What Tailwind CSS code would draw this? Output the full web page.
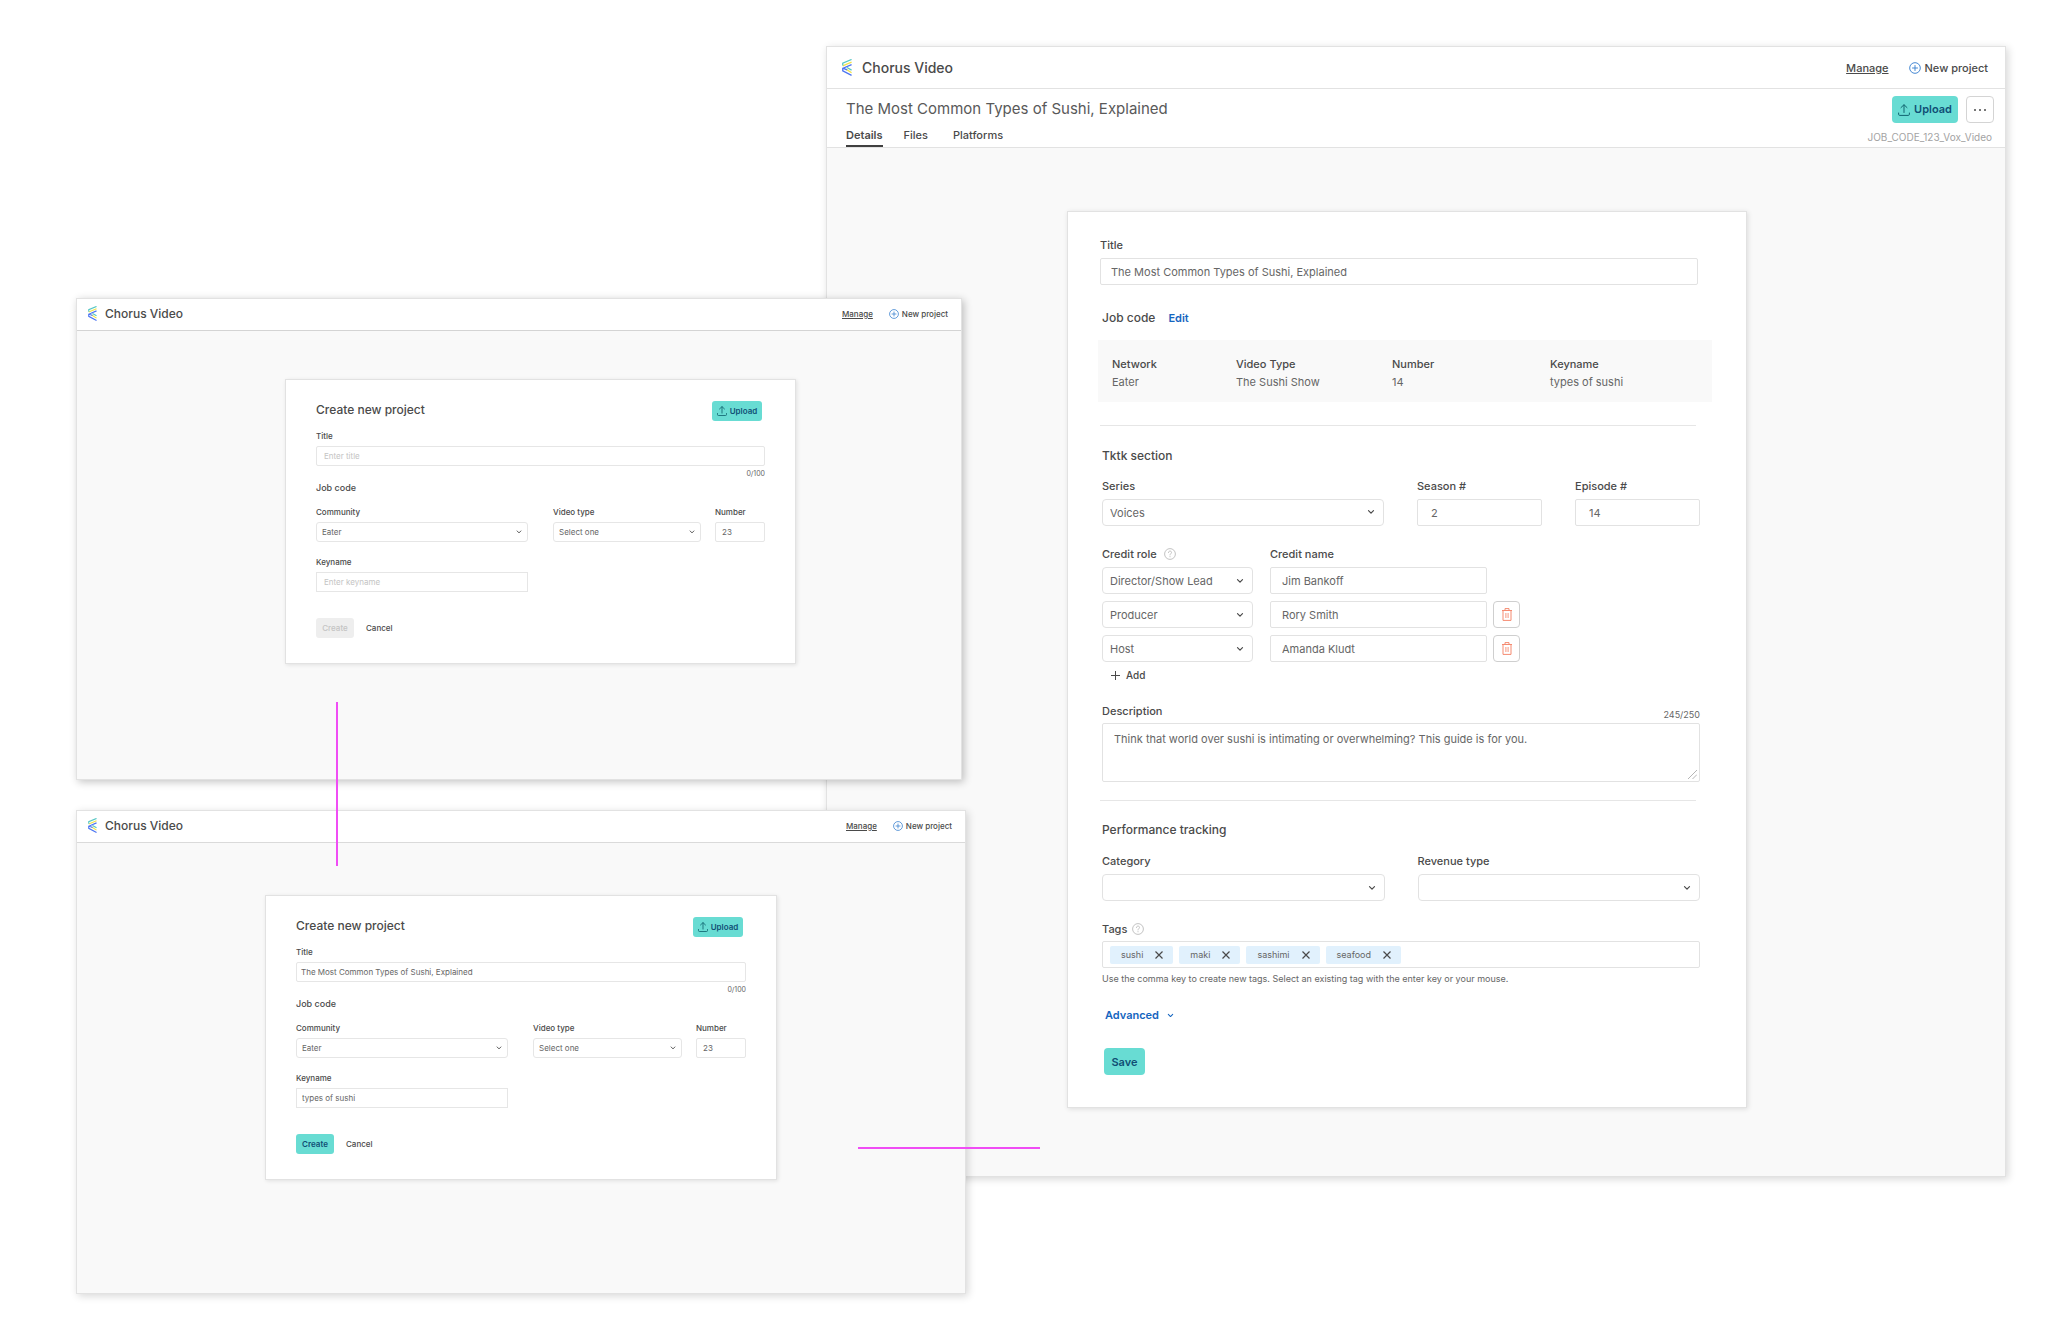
<!DOCTYPE html>
<html lang="en">
<head>
<meta charset="utf-8">
<title>Chorus Video</title>
<script src="https://cdn.jsdelivr.net/npm/@tailwindcss/browser@4"></script>
</head>
<body class="bg-white font-['Inter',sans-serif] text-[#4a4a4a]">

<svg class="hidden" aria-hidden="true">
  <symbol id="logo" viewBox="0 0 30 52">
    <g fill="none" stroke-width="4">
      <path stroke="#f2e24b" d="M29 9.500 2 21M12 31l17 11"/>
      <path stroke="#56c7c4" d="M29 1.500 2 12.500V20M15 26l14 8"/>
      <path stroke="#4b74f2" d="M29 17 3 28l12 5M2 27v9l27 14"/>
    </g>
  </symbol>
  <symbol id="plus-circle" viewBox="0 0 14 14">
    <g fill="none" stroke="#3b82d0" stroke-width="1.100"><circle cx="7" cy="7" r="6.200"/><path d="M7 3.600v6.800M3.600 7h6.800"/></g>
  </symbol>
  <symbol id="upload" viewBox="0 0 12 12">
    <path fill="none" stroke="#11646f" stroke-linecap="round" stroke-linejoin="round" d="M6 8.500V1M3 3.600 6 .7l3 2.900M.6 9v1.300c0 .7.400 1.100 1.100 1.100h8.600c.7 0 1.100-.4 1.100-1.100V9"/>
  </symbol>
  <symbol id="chevron" viewBox="0 0 8 8">
    <path fill="none" stroke="currentColor" stroke-width="1.200" stroke-linecap="round" stroke-linejoin="round" d="M1.500 2.600 4 5.200l2.500-2.600"/>
  </symbol>
  <symbol id="help" viewBox="0 0 14 14">
    <g fill="none" stroke="#b9b9b9"><circle cx="7" cy="7" r="6.300"/><path stroke-linecap="round" d="M5.200 5.400C5.200 4.200 6 3.600 7 3.600s1.800.6 1.800 1.600c0 1.300-1.800 1.400-1.800 2.900M7 10v.3"/></g>
  </symbol>
  <symbol id="trash" viewBox="0 0 10 13">
    <g fill="none" stroke="#f58a70"><path d="M0 2.500h10M3 2.500V.6h4v1.900M1 2.500v9.900h8V2.500"/><path stroke-width=".9" d="M3.900 5v5M6.100 5v5"/></g>
  </symbol>
</svg>

<main class="relative min-h-screen overflow-hidden">

  <!-- Project details window -->
  <section class="absolute left-[826px] top-[46px] w-[1180px] border border-[#e2e2e2] bg-[#f9f9f9] shadow-[2px_2px_8px_rgba(0,0,0,0.16)]">
    <header class="flex h-[42px] items-center border-b border-[#e2e2e2] bg-white pl-[15px] pr-[17px]">
      <svg class="mr-2.5 h-[17px] w-2.5"><use href="#logo"/></svg>
      <h1 class="text-sm font-medium leading-4">Chorus Video</h1>
      <nav class="ml-auto flex items-center gap-5 text-[11px] font-medium leading-4">
        <a href="#" class="underline">Manage</a>
        <a href="#" class="flex items-center gap-1"><svg class="h-3 w-3"><use href="#plus-circle"/></svg>New project</a>
      </nav>
    </header>
    <div class="flex h-[59px] justify-between border-b border-[#e2e2e2] bg-white pl-[19px] pr-[11px]">
      <div class="flex flex-col justify-between">
        <h2 class="mt-2 text-[15px] leading-6 text-[#595959]">The Most Common Types of Sushi, Explained</h2>
        <nav class="flex gap-[21px] text-[11px] font-medium leading-4">
          <a href="#" class="border-b-2 border-[#404040] pb-[2px] font-semibold">Details</a>
          <a href="#" class="pr-1">Files</a>
          <a href="#">Platforms</a>
        </nav>
      </div>
      <div class="flex flex-col items-end pt-[7px]">
        <div class="flex gap-2">
          <button class="flex h-[27px] w-[66px] items-center justify-center gap-1 rounded bg-[#68dcd3] text-[11px] font-semibold text-[#104f75]"><svg class="h-3 w-3"><use href="#upload"/></svg>Upload</button>
          <button aria-label="More" class="flex h-[27px] w-7 items-center justify-center gap-[3px] rounded border border-[#d4d4d4] bg-white"><i class="size-[2px] rounded-full bg-[#4a4a4a]"></i><i class="size-[2px] rounded-full bg-[#4a4a4a]"></i><i class="size-[2px] rounded-full bg-[#4a4a4a]"></i></button>
        </div>
        <p class="mt-1.5 pr-[2px] text-[10px] leading-4 text-[#a3a3a3]">JOB_CODE_123_Vox_Video</p>
      </div>
    </div>

    <div class="pb-[68px] pl-60 pr-[258px] pt-[63px]">
      <form class="border border-[#e2e2e2] bg-white pb-8 pl-8 pr-12 pt-[25px] text-[11px] leading-4 text-[#666] shadow-[1px_1px_5px_rgba(0,0,0,0.12)]">
        <label for="title" class="block font-medium text-[#4a4a4a]">Title</label>
        <input id="title" type="text" value="The Most Common Types of Sushi, Explained" class="mt-[5px] block h-[27px] w-full rounded-xs border border-[#e2e2e2] px-2.5">

        <div class="mt-[25px] flex items-center gap-[13px]">
          <h3 class="pl-[2px] text-xs font-medium leading-4 text-[#4a4a4a]">Job code</h3>
          <a href="#" class="font-semibold text-[#1565c0]">Edit</a>
        </div>
        <dl class="-ml-[2px] -mr-3.5 mt-3.5 grid grid-cols-[124fr_156fr_158fr_162fr] bg-[#f9f9f9] pb-3 pl-3.5 pt-4">
          <div><dt class="font-medium text-[#4a4a4a]">Network</dt><dd class="mt-[2px]">Eater</dd></div>
          <div><dt class="font-medium text-[#4a4a4a]">Video Type</dt><dd class="mt-[2px]">The Sushi Show</dd></div>
          <div><dt class="font-medium text-[#4a4a4a]">Number</dt><dd class="mt-[2px]">14</dd></div>
          <div><dt class="font-medium text-[#4a4a4a]">Keyname</dt><dd class="mt-[2px]">types of sushi</dd></div>
        </dl>
        <hr class="mr-[2px] mt-[23px] border-[#e6e6e6]">

        <div class="-mr-[2px] ml-[2px]">
          <h3 class="mt-[22px] text-xs font-medium leading-4 text-[#4a4a4a]">Tktk section</h3>
          <div class="mt-3.5 grid grid-cols-[282fr_125fr_125fr] gap-[33px]">
            <div>
              <label for="series" class="block font-medium text-[#4a4a4a]">Series</label>
              <div class="relative mt-[5px]">
                <select id="series" class="block h-[27px] w-full appearance-none rounded border border-[#e2e2e2] px-[7px]"><option>Voices</option></select>
                <svg class="pointer-events-none absolute right-[9px] top-[9px] size-2 text-[#4a4a4a]"><use href="#chevron"/></svg>
              </div>
            </div>
            <div>
              <label for="season" class="block font-medium text-[#4a4a4a]">Season #</label>
              <input id="season" type="text" value="2" class="mt-[5px] block h-[27px] w-full rounded-xs border border-[#e2e2e2] px-[13px]">
            </div>
            <div>
              <label for="episode" class="block font-medium text-[#4a4a4a]">Episode #</label>
              <input id="episode" type="text" value="14" class="mt-[5px] block h-[27px] w-full rounded-xs border border-[#e2e2e2] px-[13px]">
            </div>
          </div>

          <div class="mt-5 flex font-medium text-[#4a4a4a]">
            <label for="role1" class="flex w-[168px] items-center gap-[7px]">Credit role<svg class="h-3 w-3"><use href="#help"/></svg></label>
            <label for="name1">Credit name</label>
          </div>
          <div class="mt-[5px] flex flex-col gap-[7px]">
            <div class="flex">
              <div class="relative mr-[17px] w-[151px]">
                <select id="role1" class="block h-[27px] w-full appearance-none rounded border border-[#e2e2e2] px-[7px]"><option>Director/Show Lead</option></select>
                <svg class="pointer-events-none absolute right-[9px] top-2.5 size-2 text-[#4a4a4a]"><use href="#chevron"/></svg>
              </div>
              <input id="name1" type="text" value="Jim Bankoff" class="block h-[27px] w-[217px] rounded-xs border border-[#e2e2e2] px-[11px]">
            </div>
            <div class="flex">
              <div class="relative mr-[17px] w-[151px]">
                <select aria-label="Credit role" class="block h-[27px] w-full appearance-none rounded border border-[#e2e2e2] px-[7px]"><option>Producer</option></select>
                <svg class="pointer-events-none absolute right-[9px] top-2.5 size-2 text-[#4a4a4a]"><use href="#chevron"/></svg>
              </div>
              <input aria-label="Credit name" type="text" value="Rory Smith" class="mr-1.5 block h-[27px] w-[217px] rounded-xs border border-[#e2e2e2] px-[11px]">
              <button type="button" aria-label="Remove credit" class="flex size-[27px] items-center justify-center rounded border border-[#cfcfcf]"><svg class="h-[13px] w-2.5"><use href="#trash"/></svg></button>
            </div>
            <div class="flex">
              <div class="relative mr-[17px] w-[151px]">
                <select aria-label="Credit role" class="block h-[27px] w-full appearance-none rounded border border-[#e2e2e2] px-[7px]"><option>Host</option></select>
                <svg class="pointer-events-none absolute right-[9px] top-2.5 size-2 text-[#4a4a4a]"><use href="#chevron"/></svg>
              </div>
              <input aria-label="Credit name" type="text" value="Amanda Kludt" class="mr-1.5 block h-[27px] w-[217px] rounded-xs border border-[#e2e2e2] px-[11px]">
              <button type="button" aria-label="Remove credit" class="flex size-[27px] items-center justify-center rounded border border-[#cfcfcf]"><svg class="h-[13px] w-2.5"><use href="#trash"/></svg></button>
            </div>
          </div>
          <button type="button" class="ml-[9px] mt-[5px] flex h-4 items-center gap-1.5 text-[10px] font-medium text-[#4a4a4a]"><svg class="size-[9px]" viewBox="0 0 9 9"><path fill="none" stroke="currentColor" d="M4.500 0v9M0 4.500h9"/></svg>Add</button>

          <div class="mt-5 flex items-end justify-between">
            <label for="description" class="font-medium text-[#4a4a4a]">Description</label>
            <span class="text-[9px] leading-[9px]">245/250</span>
          </div>
          <div class="relative mt-1">
            <textarea id="description" class="block h-[59px] w-full resize-none rounded-xs border border-[#e2e2e2] px-[11px] py-[7px]">Think that world over sushi is intimating or overwhelming? This guide is for you.</textarea>
            <svg class="pointer-events-none absolute bottom-[3px] right-[3px] size-[9px]" viewBox="0 0 9 9"><path fill="none" stroke="#b5b5b5" d="M0 9 9 0M4.500 9 9 4.500"/></svg>
          </div>
        </div>
        <hr class="mr-[2px] mt-[18px] border-[#e6e6e6]">

        <div class="-mr-[2px] ml-[2px]">
          <h3 class="mt-[21px] text-xs font-medium leading-4 text-[#4a4a4a]">Performance tracking</h3>
          <div class="mt-[15px] grid grid-cols-2 gap-[33px]">
            <div>
              <label for="category" class="block font-medium text-[#4a4a4a]">Category</label>
              <div class="relative mt-[5px]">
                <select id="category" class="block h-[27px] w-full appearance-none rounded border border-[#e2e2e2] px-[7px]"><option></option></select>
                <svg class="pointer-events-none absolute right-[9px] top-2.5 size-2 text-[#4a4a4a]"><use href="#chevron"/></svg>
              </div>
            </div>
            <div>
              <label for="revenue" class="block font-medium text-[#4a4a4a]">Revenue type</label>
              <div class="relative mt-[5px]">
                <select id="revenue" class="block h-[27px] w-full appearance-none rounded border border-[#e2e2e2] px-[7px]"><option></option></select>
                <svg class="pointer-events-none absolute right-[9px] top-2.5 size-2 text-[#4a4a4a]"><use href="#chevron"/></svg>
              </div>
            </div>
          </div>

          <label for="tags" class="mt-5 flex items-center gap-[5px] font-medium text-[#4a4a4a]">Tags<svg class="h-3 w-3"><use href="#help"/></svg></label>
          <div class="mt-1 flex h-[27px] items-center gap-1.5 rounded-xs border border-[#e2e2e2] px-[7px] text-[9px]">
            <span class="flex h-[18px] items-center gap-3 rounded-xs bg-[#e1f1fd] pl-[11px] pr-2.5">sushi<button type="button" aria-label="Remove sushi" class="text-[#4a4a4a]"><svg class="size-2" viewBox="0 0 8 8"><path fill="none" stroke="currentColor" stroke-width="1.200" d="m.5.5 7 7M7.500.5l-7 7"/></svg></button></span>
            <span class="flex h-[18px] items-center gap-3 rounded-xs bg-[#e1f1fd] pl-[11px] pr-2.5">maki<button type="button" aria-label="Remove maki" class="text-[#4a4a4a]"><svg class="size-2" viewBox="0 0 8 8"><path fill="none" stroke="currentColor" stroke-width="1.200" d="m.5.5 7 7M7.500.5l-7 7"/></svg></button></span>
            <span class="flex h-[18px] items-center gap-3 rounded-xs bg-[#e1f1fd] pl-[11px] pr-2.5">sashimi<button type="button" aria-label="Remove sashimi" class="text-[#4a4a4a]"><svg class="size-2" viewBox="0 0 8 8"><path fill="none" stroke="currentColor" stroke-width="1.200" d="m.5.5 7 7M7.500.5l-7 7"/></svg></button></span>
            <span class="flex h-[18px] items-center gap-3 rounded-xs bg-[#e1f1fd] pl-[11px] pr-2.5">seafood<button type="button" aria-label="Remove seafood" class="text-[#4a4a4a]"><svg class="size-2" viewBox="0 0 8 8"><path fill="none" stroke="currentColor" stroke-width="1.200" d="m.5.5 7 7M7.500.5l-7 7"/></svg></button></span>
            <input id="tags" type="text" class="min-w-0 flex-1">
          </div>
          <p class="mt-[3px] text-[9px] leading-4">Use the comma key to create new tags. Select an existing tag with the enter key or your mouse.</p>

          <button type="button" class="ml-[3px] mt-5 flex h-4 items-center gap-2 font-semibold text-[#1565c0]">Advanced<svg class="size-[7px]"><use href="#chevron"/></svg></button>
          <button type="button" class="ml-[2px] mt-[25px] block h-[27px] w-[41px] rounded bg-[#68dcd3] text-[11px] font-semibold text-[#104f75]">Save</button>
        </div>
      </form>
    </div>
  </section>

  <!-- New project window, empty form -->
  <section class="absolute left-[76px] top-[298px] w-[886px] border border-[#e2e2e2] bg-[#f9f9f9] shadow-[2px_2px_8px_rgba(0,0,0,0.24)]">
    <header class="flex h-8 items-center border-b border-[#d4d4d4] bg-white pb-[2px] pl-[11px] pr-[13px]">
      <svg class="mr-2 h-[15px] w-[9px]"><use href="#logo"/></svg>
      <h1 class="text-xs font-medium leading-4">Chorus Video</h1>
      <nav class="ml-auto flex items-center gap-4 text-[8px] font-medium leading-3">
        <a href="#" class="underline">Manage</a>
        <a href="#" class="flex items-center gap-[3px]"><svg class="size-2.5"><use href="#plus-circle"/></svg>New project</a>
      </nav>
    </header>
    <div class="pb-[115px] pl-[208px] pr-[165px] pt-12">
      <form class="border border-[#e2e2e2] bg-white px-[30px] pb-[25px] pt-[21px] text-[8px] leading-3 text-[#666] shadow-[1px_1px_4px_rgba(0,0,0,0.1)]">
        <div class="flex items-start justify-between pr-[3px]">
          <h2 class="text-xs font-medium leading-[18px] text-[#4a4a4a]">Create new project</h2>
          <button type="button" class="flex h-5 w-[50px] items-center justify-center gap-[3px] rounded-[3px] bg-[#68dcd3] font-semibold text-[#104f75]"><svg class="size-2.5"><use href="#upload"/></svg>Upload</button>
        </div>
        <label for="a-title" class="mt-[9px] block font-medium text-[#4a4a4a]">Title</label>
        <input id="a-title" type="text" placeholder="Enter title" class="mt-1 block h-5 w-full rounded-xs border border-[#e6e6e6] px-[7px] placeholder:text-[#c4c4c4]">
        <p class="mt-[2px] text-right text-[7px]">0/100</p>
        <h3 class="mt-[2px] text-[9px] font-medium leading-3 text-[#4a4a4a]">Job code</h3>
        <div class="mt-3 flex">
          <div class="mr-[25px] w-[212px]">
            <label for="a-community" class="block font-medium text-[#4a4a4a]">Community</label>
            <div class="relative mt-1">
              <select id="a-community" class="block h-5 w-full appearance-none rounded-[3px] border border-[#e6e6e6] px-[5px]"><option>Eater</option></select>
              <svg class="pointer-events-none absolute right-1.5 top-[7px] size-1.5 text-[#4a4a4a]"><use href="#chevron"/></svg>
            </div>
          </div>
          <div class="mr-3.5 flex-1">
            <label for="a-type" class="block font-medium text-[#4a4a4a]">Video type</label>
            <div class="relative mt-1">
              <select id="a-type" class="block h-5 w-full appearance-none rounded-[3px] border border-[#e6e6e6] px-[5px]"><option>Select one</option></select>
              <svg class="pointer-events-none absolute right-1.5 top-[7px] size-1.5 text-[#4a4a4a]"><use href="#chevron"/></svg>
            </div>
          </div>
          <div class="w-[50px]">
            <label for="a-number" class="block font-medium text-[#4a4a4a]">Number</label>
            <input id="a-number" type="text" value="23" class="mt-1 block h-5 w-full rounded-xs border border-[#e6e6e6] px-1.5">
          </div>
        </div>
        <label for="a-key" class="mt-3.5 block font-medium text-[#4a4a4a]">Keyname</label>
        <input id="a-key" type="text" placeholder="Enter keyname" class="mt-1 block h-5 w-[212px] border border-[#e6e6e6] px-[7px] placeholder:text-[#c4c4c4]">
        <div class="mt-[26px] flex items-center gap-3 font-medium">
          <button type="button" disabled class="h-5 w-[38px] rounded-[3px] bg-[#eee] text-[#c4c4c4]">Create</button>
          <button type="button" class="text-[#4a4a4a]">Cancel</button>
        </div>
      </form>
    </div>
  </section>

  <!-- New project window, filled form -->
  <section class="absolute left-[76px] top-[810px] w-[890px] border border-[#e2e2e2] bg-[#f9f9f9] shadow-[2px_2px_8px_rgba(0,0,0,0.16)]">
    <header class="flex h-8 items-center border-b border-[#dadada] bg-white pb-[2px] pl-[11px] pr-[13px]">
      <svg class="mr-2 h-[15px] w-[9px]"><use href="#logo"/></svg>
      <h1 class="text-xs font-medium leading-4">Chorus Video</h1>
      <nav class="ml-auto flex items-center gap-4 text-[8px] font-medium leading-3">
        <a href="#" class="underline">Manage</a>
        <a href="#" class="flex items-center gap-[3px]"><svg class="size-2.5"><use href="#plus-circle"/></svg>New project</a>
      </nav>
    </header>
    <div class="px-[188px] pb-[113px] pt-[52px]">
      <form class="border border-[#e2e2e2] bg-white px-[30px] pb-[25px] pt-[21px] text-[8px] leading-3 text-[#666] shadow-[1px_1px_4px_rgba(0,0,0,0.1)]">
        <div class="flex items-start justify-between pr-[3px]">
          <h2 class="text-xs font-medium leading-[18px] text-[#4a4a4a]">Create new project</h2>
          <button type="button" class="flex h-5 w-[50px] items-center justify-center gap-[3px] rounded-[3px] bg-[#68dcd3] font-semibold text-[#104f75]"><svg class="size-2.5"><use href="#upload"/></svg>Upload</button>
        </div>
        <label for="b-title" class="mt-[9px] block font-medium text-[#4a4a4a]">Title</label>
        <input id="b-title" type="text" value="The Most Common Types of Sushi, Explained" class="mt-1 block h-5 w-full rounded-xs border border-[#e6e6e6] px-1">
        <p class="mt-[2px] text-right text-[7px]">0/100</p>
        <h3 class="mt-[2px] text-[9px] font-medium leading-3 text-[#4a4a4a]">Job code</h3>
        <div class="mt-3 flex">
          <div class="mr-[25px] w-[212px]">
            <label for="b-community" class="block font-medium text-[#4a4a4a]">Community</label>
            <div class="relative mt-1">
              <select id="b-community" class="block h-5 w-full appearance-none rounded-[3px] border border-[#e6e6e6] px-[5px]"><option>Eater</option></select>
              <svg class="pointer-events-none absolute right-1.5 top-[7px] size-1.5 text-[#4a4a4a]"><use href="#chevron"/></svg>
            </div>
          </div>
          <div class="mr-3.5 flex-1">
            <label for="b-type" class="block font-medium text-[#4a4a4a]">Video type</label>
            <div class="relative mt-1">
              <select id="b-type" class="block h-5 w-full appearance-none rounded-[3px] border border-[#e6e6e6] px-[5px]"><option>Select one</option></select>
              <svg class="pointer-events-none absolute right-1.5 top-[7px] size-1.5 text-[#4a4a4a]"><use href="#chevron"/></svg>
            </div>
          </div>
          <div class="w-[50px]">
            <label for="b-number" class="block font-medium text-[#4a4a4a]">Number</label>
            <input id="b-number" type="text" value="23" class="mt-1 block h-5 w-full rounded-xs border border-[#e6e6e6] px-1.5">
          </div>
        </div>
        <label for="b-key" class="mt-3.5 block font-medium text-[#4a4a4a]">Keyname</label>
        <input id="b-key" type="text" value="types of sushi" class="mt-1 block h-5 w-[212px] border border-[#e6e6e6] px-[5px]">
        <div class="mt-[26px] flex items-center gap-3 font-medium">
          <button type="button" class="h-5 w-[38px] rounded-[3px] bg-[#68dcd3] font-semibold text-[#104f75]">Create</button>
          <button type="button" class="text-[#4a4a4a]">Cancel</button>
        </div>
      </form>
    </div>
  </section>

  <!-- Flow connectors -->
  <div class="absolute left-[336px] top-[702px] h-[164px] w-[2px] bg-[#f04df5]"></div>
  <div class="absolute left-[858px] top-[1147px] h-[2px] w-[182px] bg-[#f04df5]"></div>
</main>
</body>
</html>
